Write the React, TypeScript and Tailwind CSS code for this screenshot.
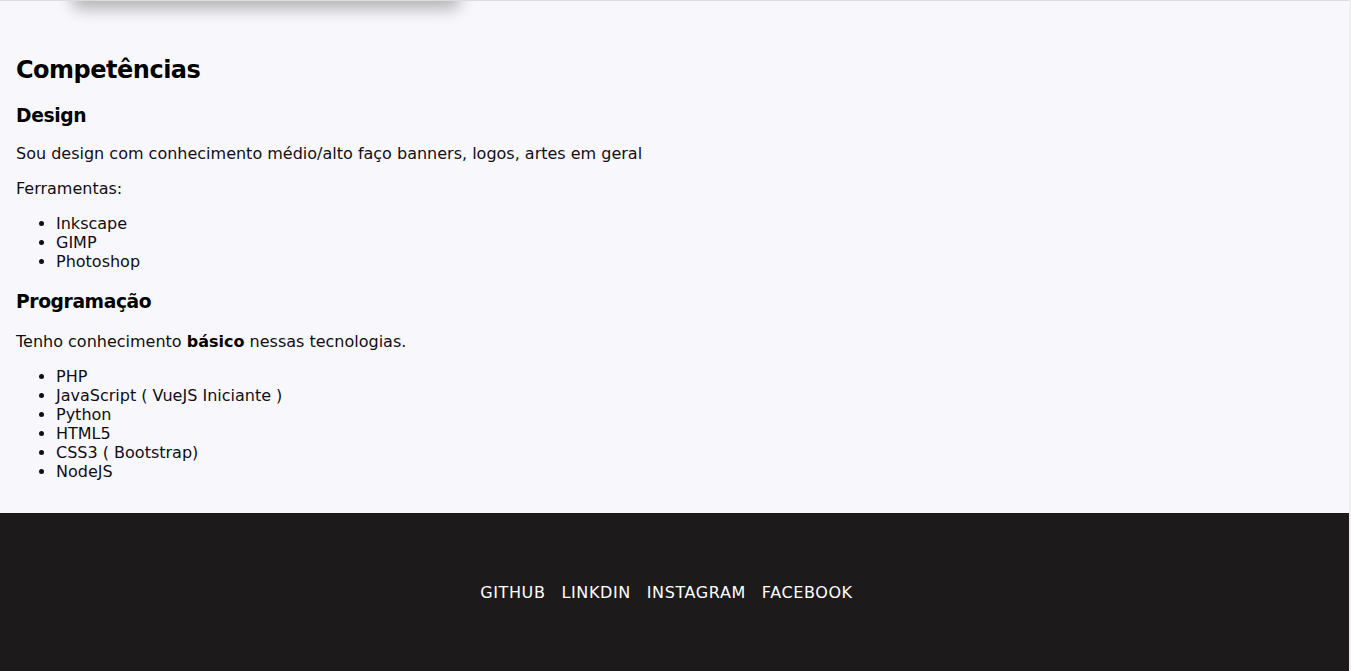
import React from 'react';

const design = ['Inkscape', 'GIMP', 'Photoshop'];
const programacao = ['PHP', 'JavaScript ( VueJS Iniciante )', 'Python', 'HTML5', 'CSS3 ( Bootstrap)', 'NodeJS'];
const links = ['GITHUB', 'LINKDIN', 'INSTAGRAM', 'FACEBOOK'];

export default function App() {
  return (
    <div className="min-h-[671px] bg-[#efeff1] font-['DejaVu_Sans',sans-serif] text-[#110d14]">
      <div className="mr-[2px]">
        <section className="relative overflow-hidden border-t border-[#dcdce0] bg-[#f8f8fc] px-4 pt-[35px] pb-4">
          {/* bottom of the card above, only its shadow shows */}
          <div className="absolute left-[72px] top-[-60px] h-[60px] w-[388px] rounded-lg bg-white shadow-[0_8px_16px_rgba(0,0,0,0.28)]" />

          <h2 className="my-[0.83em] text-[24px] font-bold leading-[29px] tracking-[-0.5px] text-black">Competências</h2>

          <h3 className="mt-[1em] mb-[17px] text-[18.72px] font-bold leading-[22px] tracking-[-0.4px] text-black">Design</h3>
          <p className="my-4 text-base leading-[19px]">Sou design com conhecimento médio/alto faço banners, logos, artes em geral</p>
          <p className="my-4 text-base leading-[19px]">Ferramentas:</p>
          <ul className="my-4 list-disc pl-10 text-base leading-[19px]">
            {design.map(item => (
              <li key={item}>{item}</li>
            ))}
          </ul>

          <h3 className="mt-[20px] mb-[1em] text-[18.72px] font-bold leading-[22px] tracking-[-0.4px] text-black">Programação</h3>
          <p className="my-4 text-base leading-[19px]">
            Tenho conhecimento <strong className="font-bold text-black">básico</strong> nessas tecnologias.
          </p>
          <ul className="my-4 list-disc pl-10 text-base leading-[19px]">
            {programacao.map(item => (
              <li key={item}>{item}</li>
            ))}
          </ul>
        </section>

        <footer className="flex h-[160px] items-center justify-center bg-[#1c1a1b]">
          <div className="flex">
            {links.map(link => (
              <a key={link} href="#" className="mr-4 text-base leading-[19px] tracking-[0.6px] text-white">
                {link}
              </a>
            ))}
          </div>
        </footer>
      </div>
    </div>
  );
}
